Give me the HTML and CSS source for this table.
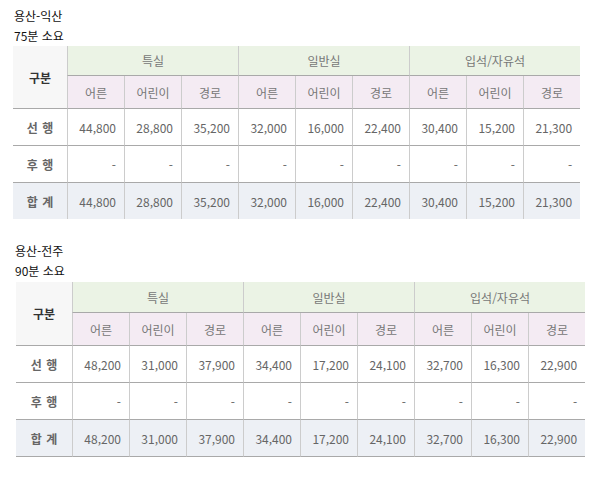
FILE: index.html
```html
<!DOCTYPE html>
<html lang="ko">
<head>
<meta charset="utf-8">
<link rel="stylesheet" href="styles.css">
</head>
<body>
<section class="route route-first">
  <div class="title">
    <div>용산-익산</div>
    <div>75분 소요</div>
  </div>
  <table class="fare fare-first">
    <colgroup><col class="c0"><col><col><col><col><col><col><col><col><col></colgroup>
    <tr class="h1">
      <th rowspan="2" class="head-gubun">구분</th>
      <th colspan="3">특실</th>
      <th colspan="3">일반실</th>
      <th colspan="3">입석/자유석</th>
    </tr>
    <tr class="h2">
      <th>어른</th><th>어린이</th><th>경로</th>
      <th>어른</th><th>어린이</th><th>경로</th>
      <th>어른</th><th>어린이</th><th>경로</th>
    </tr>
    <tr class="row">
      <th class="lbl">선 행</th>
      <td>44,800</td><td>28,800</td><td>35,200</td>
      <td>32,000</td><td>16,000</td><td>22,400</td>
      <td>30,400</td><td>15,200</td><td>21,300</td>
    </tr>
    <tr class="row">
      <th class="lbl">후 행</th>
      <td>-</td><td>-</td><td>-</td><td>-</td><td>-</td><td>-</td><td>-</td><td>-</td><td>-</td>
    </tr>
    <tr class="row total">
      <th class="lbl">합 계</th>
      <td>44,800</td><td>28,800</td><td>35,200</td>
      <td>32,000</td><td>16,000</td><td>22,400</td>
      <td>30,400</td><td>15,200</td><td>21,300</td>
    </tr>
  </table>
</section>

<section class="route route-second">
  <div class="title">
    <div>용산-전주</div>
    <div>90분 소요</div>
  </div>
  <table class="fare fare-second">
    <colgroup><col class="c0"><col><col><col><col><col><col><col><col><col></colgroup>
    <tr class="h1">
      <th rowspan="2" class="head-gubun">구분</th>
      <th colspan="3">특실</th>
      <th colspan="3">일반실</th>
      <th colspan="3">입석/자유석</th>
    </tr>
    <tr class="h2">
      <th>어른</th><th>어린이</th><th>경로</th>
      <th>어른</th><th>어린이</th><th>경로</th>
      <th>어른</th><th>어린이</th><th>경로</th>
    </tr>
    <tr class="row">
      <th class="lbl">선 행</th>
      <td>48,200</td><td>31,000</td><td>37,900</td>
      <td>34,400</td><td>17,200</td><td>24,100</td>
      <td>32,700</td><td>16,300</td><td>22,900</td>
    </tr>
    <tr class="row">
      <th class="lbl">후 행</th>
      <td>-</td><td>-</td><td>-</td><td>-</td><td>-</td><td>-</td><td>-</td><td>-</td><td>-</td>
    </tr>
    <tr class="row total">
      <th class="lbl">합 계</th>
      <td>48,200</td><td>31,000</td><td>37,900</td>
      <td>34,400</td><td>17,200</td><td>24,100</td>
      <td>32,700</td><td>16,300</td><td>22,900</td>
    </tr>
  </table>
</section>
</body>
</html>
```

FILE: styles.css
```css
html, body {
  margin: 0;
  padding: 0;
  background: #fff;
}
body {
  font-family: "Noto Sans CJK KR", "Noto Sans", sans-serif;
  font-size: 12px;
  color: #222;
  padding-top: 6px;
}
.title {
  line-height: 20px;
  font-size: 12px;
  color: #111;
}
.route-first {
  padding-left: 14px;
}
.route-first .fare {
  margin-left: -1px;
}
.route-second {
  margin-top: 22px;
  padding-left: 15px;
}
.route-second .title {
  margin-bottom: 1px;
}
.route-second .fare {
  margin-left: 1px;
}
.fare {
  border-collapse: separate;
  border-spacing: 0;
  table-layout: fixed;
  font-size: 12px;
}
.fare-first {
  width: 567px;
}
.fare-first col { width: 57px; }
.fare-first col.c0 { width: 54px; }
.fare-second {
  width: 569px;
}
.fare-second col { width: 57px; }
.fare-second col.c0 { width: 56px; }

.fare th, .fare td {
  padding: 0;
  box-sizing: border-box;
  border-left: 1px solid #cccccc;
  border-bottom: 1px solid #a9a9a9;
  font-weight: normal;
  color: #777;
  text-align: center;
  vertical-align: middle;
  white-space: nowrap;
}
.fare tr > :first-child {
  border-left: 0;
}
.fare .h1 th {
  background: #ebf3e5;
  color: #777;
}
.fare .h1 th.head-gubun {
  background: #f7f7f7;
  color: #333;
  font-weight: bold;
  font-size: 12px;
}
.fare .h2 th {
  background: #f4ebf3;
  color: #777;
  border-left: 1px solid #cccccc;
}
.fare .h1 { height: 30px; }
.fare-second .h1 { height: 31px; }
.fare .h2 { height: 33px; }
.fare .row { height: 37px; }
.fare-first .row.total { height: 36px; }
.fare-first .row.total > * { border-bottom: 0; }

.fare td {
  text-align: right;
  padding-right: 8px;
  color: #666;
}
.fare th.lbl {
  font-weight: bold;
  color: #666;
  font-size: 12px;
  word-spacing: 1px;
}
.fare .total > * {
  background: #edf0f5;
}
```
